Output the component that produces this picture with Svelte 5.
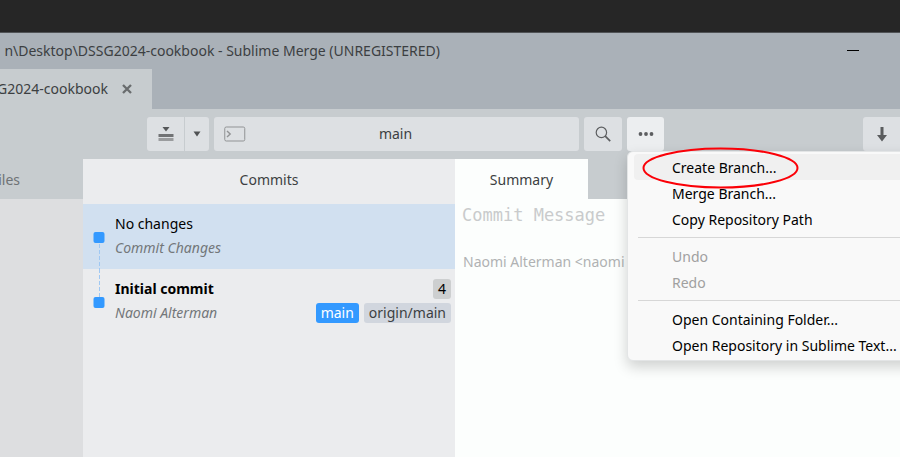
<script>
  const groups = [
    [{ label: 'Create Branch...', active: true }, { label: 'Merge Branch...' }, { label: 'Copy Repository Path' }],
    [{ label: 'Undo', disabled: true }, { label: 'Redo', disabled: true }],
    [{ label: 'Open Containing Folder...' }, { label: 'Open Repository in Sublime Text...' }]
  ];
</script>

<div class="window">
  <div class="backdrop"></div>
  <header class="titlebar">
    <div class="title"><span>n\Desktop\DSSG2024-cookbook - Sublime Merge (UNREGISTERED)</span></div>
    <button class="minimize" aria-label="Minimize">
      <svg width="12" height="12" viewBox="0 0 12 12"><path d="M0 5.5H12" stroke="#000" /></svg>
    </button>
  </header>
  <div class="tabs">
    <div class="tab">
      <span class="tabname"><span>G2024-cookbook</span></span>
      <button class="close" aria-label="Close tab">
        <svg width="10" height="10" viewBox="0 0 10 10"><path d="M1 1L9 9M9 1L1 9" stroke="#696c6e" stroke-width="2.3" /></svg>
      </button>
    </div>
  </div>
  <nav class="toolbar">
    <div class="split">
      <button class="tool stash" aria-label="Stash">
        <svg width="16" height="16" viewBox="0 0 16 16">
          <path d="M4.5 1h7L8 5.5z" fill="#555759" />
          <path d="M.5 8h15v3H.5z" fill="#717375" />
          <path d="M.5 12h15v3H.5z" fill="#9a9c9e" />
        </svg>
      </button>
      <button class="tool arrow" aria-label="Stash options">
        <svg width="8" height="6" viewBox="0 0 8 6"><path d="M.5 .5h7L4 5.5z" fill="#505254" /></svg>
      </button>
    </div>
    <button class="branch">
      <svg width="22" height="16" viewBox="0 0 22 16" fill="none" stroke="#919395">
        <rect x=".75" y="1" width="20" height="14" rx="1.5" />
        <path d="M3 5l3.2 3L3 11" stroke-width="1.4" />
      </svg>
      <span>main</span>
    </button>
    <button class="tool search" aria-label="Search">
      <svg width="16" height="16" viewBox="0 0 16 16" fill="none" stroke="#5c5e60">
        <circle cx="6.4" cy="6.4" r="5.2" stroke-width="1.2" />
        <path d="M10.2 10.2l5 5" stroke-width="1.7" />
      </svg>
    </button>
    <div class="more">
      <button class="tool open" aria-label="More">
        <svg width="16" height="4" viewBox="0 0 16 4" fill="#5c5e60">
          <circle cx="2.5" cy="2" r="1.9" /><circle cx="8" cy="2" r="1.9" /><circle cx="13.5" cy="2" r="1.9" />
        </svg>
      </button>
      <div class="menu" role="menu">
        {#each groups as group, i}
          {#if i > 0}<hr />{/if}
          {#each group as item}
            <button role="menuitem" class:active={item.active} disabled={item.disabled}>{item.label}</button>
          {/each}
        {/each}
        <svg class="marker" width="157" height="42" viewBox="0 0 157 42">
          <ellipse cx="78.5" cy="21" rx="77" ry="19.5" fill="none" stroke="#fb0007" stroke-width="2" />
        </svg>
      </div>
    </div>
    <button class="tool pull" aria-label="Pull">
      <svg width="10" height="16" viewBox="0 0 10 16"><path d="M3.5 1h3v8H10L5 15.5 0 9h3.5z" fill="#5a5c5e" /></svg>
    </button>
  </nav>
  <main>
    <aside>
      <h2><span>iles</span></h2>
    </aside>
    <section class="commits">
      <h2>Commits</h2>
      <ul>
        <li class="selected">
          <svg class="node" width="12" height="65" viewBox="0 0 12 65">
            <path d="M6.5 40V65" stroke="#9fc8f3" stroke-dasharray="4 2" />
            <rect x=".5" y="28" width="11" height="11" rx="2" fill="#3399ff" />
          </svg>
          <div class="line">No changes</div>
          <div class="line"><em>Commit Changes</em></div>
        </li>
        <li>
          <svg class="node" width="12" height="65" viewBox="0 0 12 65">
            <path d="M6.5 0V28" stroke="#9fc8f3" stroke-dasharray="4 2" />
            <rect x=".5" y="28" width="11" height="11" rx="2" fill="#3399ff" />
          </svg>
          <div class="line"><strong>Initial commit</strong><span class="badge count">4</span></div>
          <div class="line"><em>Naomi Alterman</em><span class="badge head">main</span><span class="badge remote">origin/main</span></div>
        </li>
      </ul>
    </section>
    <section class="details">
      <h2>Summary</h2>
      <div class="body">
        <input aria-label="Commit message" placeholder="Commit Message" />
        <p>Naomi Alterman &lt;naomi</p>
      </div>
    </section>
  </main>
</div>

<style>
  :global(body) { margin: 0; }
  .window {
    position: relative;
    display: flex;
    flex-direction: column;
    min-height: 100vh;
    overflow: hidden;
    background: #c7cccf;
    color: #3c3f42;
    font: 14px/20px "Noto Sans", "Open Sans", sans-serif;
  }
  button { border: 0; padding: 0; margin: 0; background: none; font: inherit; color: inherit; }
  svg { display: block; flex: none; }
  h2 { margin: 0; font: inherit; }
  .backdrop { height: 32px; background: #262626; border-bottom: 1px solid #505356; }
  .titlebar { display: flex; justify-content: space-between; height: 36px; padding-right: 41px; align-items: center; background: #aab1b8; }
  .title { display: flex; justify-content: flex-end; width: 440px; white-space: nowrap; }
  .title span, .tabname span, aside span { flex: none; }
  .tabs { height: 40px; background: #aab1b8; }
  .tab { display: flex; align-items: center; gap: 14px; box-sizing: border-box; width: 152px; height: 40px; background: #c7cccf; }
  .tabname { display: flex; justify-content: flex-end; width: 108px; }
  .toolbar { display: flex; gap: 5px; padding: 8px 0 8px 147px; height: 34px; }
  .split { display: flex; gap: 1px; }
  .tool { display: flex; align-items: center; justify-content: center; width: 38px; height: 34px; border-radius: 3px; background: #dde0e3; }
  .stash { width: 37px; border-radius: 3px 0 0 3px; }
  .arrow { width: 24px; border-radius: 0 3px 3px 0; }
  .branch { display: flex; align-items: center; flex: 0 1 365px; box-sizing: border-box; padding: 0 10px; border-radius: 3px; background: #dde0e3; }
  .branch span { flex: 1; padding-right: 24px; text-align: center; }
  .more { position: relative; }
  .open { width: 37px; background: #eceef0; }
  .pull { margin-left: auto; width: 37px; border-radius: 3px 0 0 3px; }
  .menu {
    position: absolute;
    z-index: 2;
    top: 100%;
    left: 0;
    width: 300px;
    box-sizing: border-box;
    padding: 2px 6px;
    border: 1px solid #e3e5e6;
    border-radius: 6px;
    background: #f9f9f9;
    box-shadow: 0 6px 14px rgba(0, 0, 0, 0.18);
    color: #000;
  }
  .menu button { display: block; width: 100%; height: 26px; padding: 1px 0 0 38px; border-radius: 4px; text-align: left; white-space: nowrap; }
  .menu .active { background: #f0f0f0; }
  .menu button:disabled { color: #a0a0a0; }
  .menu hr { height: 1px; margin: 5px 4px; border: 0; background: #d7d7d7; }
  .marker { position: absolute; top: -5px; left: 14px; pointer-events: none; }
  main { display: grid; grid-template-columns: 83px 372px 1fr; flex: 1; }
  aside { background: #dddee0; }
  aside h2 { display: flex; justify-content: flex-end; box-sizing: border-box; height: 40px; padding: 11px 63px 0 0; background: #c7cccf; color: #6f7376; }
  .commits { background: #ebecee; }
  .commits h2 { padding: 11px 0 14px; text-align: center; }
  ul { margin: 0; padding: 0; list-style: none; }
  li { position: relative; box-sizing: border-box; height: 65px; padding: 8px 4px 0 32px; color: #000; }
  .selected { background: #d1e0f0; }
  .node { position: absolute; top: 0; left: 10px; }
  .line { display: flex; align-items: center; gap: 5px; height: 24px; }
  em { flex: 1; color: #73777a; }
  strong { flex: 1; }
  .badge { padding: 0 5px; border-radius: 3px; }
  .count { background: #cdcfd0; }
  .head { background: #3399ff; color: #fff; }
  .remote { background: #d1d6de; color: #3c3f42; }
  .details { display: flex; flex-direction: column; background: #c7cccf; }
  .details h2 { width: 133px; height: 29px; padding-top: 11px; background: #fcfefd; text-align: center; }
  .body { flex: 1; padding: 4px 7px; background: #fcfefd; }
  input { display: block; width: 100%; height: 24px; padding: 0; border: 0; outline: 0; background: none; font: 17px/24px "DejaVu Sans Mono", monospace; }
  input::placeholder { color: #c9cbcc; opacity: 1; }
  p { margin: 25px 0 0 1px; color: #b0b2b3; white-space: nowrap; }
</style>
